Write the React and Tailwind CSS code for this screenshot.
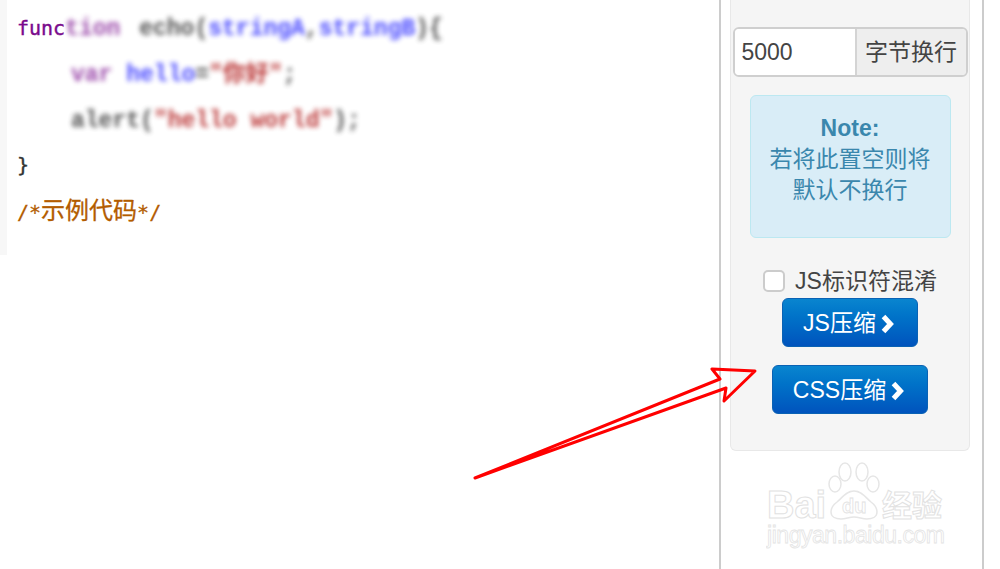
const mono = "font-['DejaVu_Sans_Mono','Noto_Sans_CJK_SC',monospace]";
const blurred = "translate-y-[2px] font-['Liberation_Mono','Noto_Sans_CJK_SC',monospace] text-[23px] font-bold opacity-85 blur-[2.5px]";

function BaiduMark() {
  return (
    <svg width="184" height="96" viewBox="0 0 184 96" className="block">
      <g fill="#fff" stroke="#e6e6e6" strokeWidth="1.5">
        <ellipse cx="79" cy="11" rx="6" ry="9" />
        <ellipse cx="96" cy="11" rx="6" ry="9" />
        <ellipse cx="69" cy="23" rx="6" ry="8" />
        <ellipse cx="107" cy="23" rx="6" ry="8" />
        <path d="M88 30c-8 0-12 7-17 11-4 3-6 6-6 10 0 5 5 7 10 7 5 0 8-2 13-2s8 2 13 2 10-2 10-7c0-4-2-7-6-10-5-4-9-11-17-11z" />
      </g>
      <g fontFamily="'Liberation Sans', sans-serif" fontWeight="700" fill="#fff" stroke="#e2e2e2" strokeWidth="1">
        <text x="1" y="57" fontSize="38">Bai</text>
        <text x="76" y="52" fontSize="20" strokeWidth="0.8">du</text>
      </g>
      <text x="116" y="55" fontSize="30" fontWeight="700" fontFamily="'Noto Sans CJK SC', sans-serif" fill="#fff" stroke="#e2e2e2" strokeWidth="1">经验</text>
      <text x="1" y="82" fontSize="23" fontFamily="'Liberation Sans', sans-serif" fill="#fff" stroke="#e4e4e4" strokeWidth="0.8" textLength="178">jingyan.baidu.com</text>
    </svg>
  );
}

function Chevron() {
  return (
    <svg width="17" height="20" viewBox="0 0 17 20" className="ml-[4px]">
      <path d="M3.5 2.5 10.5 10 3.5 17.5" fill="none" stroke="#fff" strokeWidth="5" strokeLinejoin="miter" />
    </svg>
  );
}

function BlueButton({ label, width }) {
  return (
    <button className={`flex h-[49px] ${width} items-center justify-center rounded-[6px] border border-[#0a62b4] bg-gradient-to-b from-[#0a85cf] to-[#0053bd] pt-[2px] text-[23px] text-white`}>
      {label}
      <Chevron />
    </button>
  );
}

export default function App() {
  return (
    <div className="relative flex h-[569px] w-[1000px] overflow-hidden bg-white font-['Liberation_Sans','Noto_Sans_CJK_SC',sans-serif]">
      <div className="w-[719px] shrink-0">
        <div className={`h-[255px] border-l-[7px] border-[#f7f7f7] pl-[10px] pt-[4px] text-[20px] leading-[46px] text-[#333] ${mono}`}>
          <div className="flex whitespace-pre">
            <span className="translate-y-[1px] text-[#7a0a8c] [-webkit-text-stroke:0.4px_#7a0a8c]">func</span>
            <span className={blurred}>
              <span className="mr-[5px] text-[#8a2a9c]">tion</span> echo(<span className="text-[#2a2aff]">stringA</span>,<span className="text-[#2a2aff]">stringB</span>){"{"}
            </span>
          </div>
          <div className={`whitespace-pre pl-[54px] ${blurred}`}>
            <span className="text-[#8a2a9c]">var</span> <span className="text-[#2a2aff]">hello</span>=<span className="text-[#b01818]">"你好"</span>;
          </div>
          <div className={`whitespace-pre pl-[54px] ${blurred}`}>
            alert(<span className="text-[#b01818]">"hello world"</span>);
          </div>
          <div className="[-webkit-text-stroke:0.4px_#333]">{"}"}</div>
          <div className="text-[#b35c00] [-webkit-text-stroke:0.3px_#b35c00]">/*<span className="text-[24px]">示例代码</span>*/</div>
        </div>
      </div>

      <div className="flex h-full w-[265px] shrink-0 flex-col border-x-2 border-[#cccccc] pl-[9px]">
        <div className="flex h-[451px] w-[240px] flex-col items-center rounded-b-[6px] border border-t-0 border-[#e8e8e8] bg-[#f5f5f5] pt-[27px]">
          <div className="flex h-[50px] w-[235px] overflow-hidden rounded-[6px] border-2 border-[#cfcfcf] text-[#444]">
            <div className="flex w-[120px] items-center bg-white pl-[7px] text-[23px]">5000</div>
            <div className="flex flex-1 items-center justify-center border-l-2 border-[#d4d4d4] bg-[#eeeeee] text-[23px]">字节换行</div>
          </div>
          <div className="mt-[18px] flex h-[143px] w-[201px] flex-col items-center rounded-[6px] border border-[#bce8f1] bg-[#d9edf7] pt-[17px] text-[23px] leading-[31px] text-[#3a87ad]">
            <strong className="font-bold">Note:</strong>
            <span>若将此置空则将</span>
            <span>默认不换行</span>
          </div>
          <label className="mt-[27px] flex h-[32px] items-center text-[23px] text-[#444]">
            <span className="mr-[10px] h-[22px] w-[22px] rounded-[5px] border-2 border-[#cccccc] bg-white" />
            JS标识符混淆
          </label>
          <div className="mt-[1px]">
            <BlueButton label="JS压缩" width="w-[136px]" />
          </div>
          <div className="mt-[18px]">
            <BlueButton label="CSS压缩" width="w-[156px]" />
          </div>
        </div>
        <div className="ml-[36px] mt-[10px]">
          <BaiduMark />
        </div>
      </div>

      {/* hand-drawn arrow sits over the page */}
      <svg className="absolute left-0 top-0" width="1000" height="569" viewBox="0 0 1000 569">
        <path
          d="M475 478 720 379 712 369 755 371 724 401 726 388Z"
          fill="none"
          stroke="#ff0000"
          strokeWidth="3"
          strokeLinejoin="round"
        />
      </svg>
    </div>
  );
}
